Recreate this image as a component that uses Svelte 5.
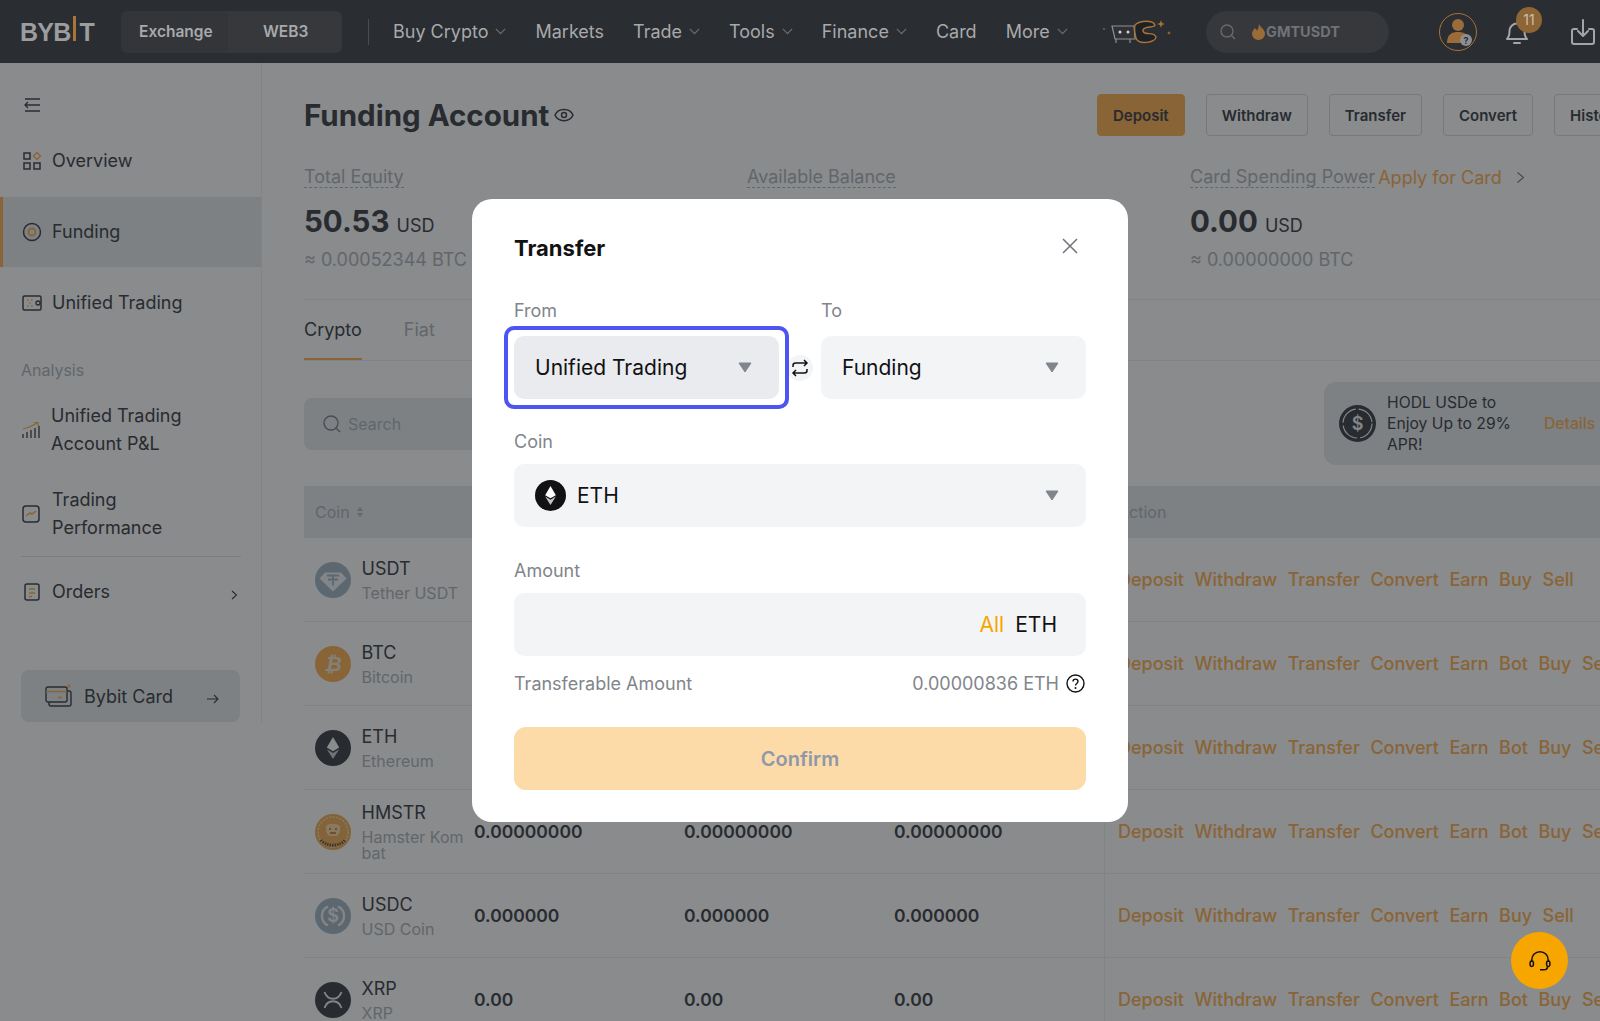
<script lang="ts">
  const nav = [
    { label: 'Buy Crypto', more: true },
    { label: 'Markets', more: false },
    { label: 'Trade', more: true },
    { label: 'Tools', more: true },
    { label: 'Finance', more: true },
    { label: 'Card', more: false },
    { label: 'More', more: true }
  ];

  const full = ['Deposit', 'Withdraw', 'Transfer', 'Convert', 'Earn', 'Bot', 'Buy', 'Sell'];
  const short = ['Deposit', 'Withdraw', 'Transfer', 'Convert', 'Earn', 'Buy', 'Sell'];

  const rows = [
    { coin: 'usdt', symbol: 'USDT', name: 'Tether USDT', value: '0.0000', actions: short },
    { coin: 'btc', symbol: 'BTC', name: 'Bitcoin', value: '0.00000000', actions: full },
    { coin: 'eth', symbol: 'ETH', name: 'Ethereum', value: '0.00000000', actions: full },
    { coin: 'hmstr', symbol: 'HMSTR', name: 'Hamster Kombat', value: '0.00000000', actions: full },
    { coin: 'usdc', symbol: 'USDC', name: 'USD Coin', value: '0.000000', actions: short },
    { coin: 'xrp', symbol: 'XRP', name: 'XRP', value: '0.00', actions: full }
  ];
</script>

{#snippet chevron()}
  <svg class="chev" width="11" height="7" viewBox="0 0 13 8" fill="none"><path d="M1 1l5.500 5.500L12 1" stroke="#6d7074" stroke-width="1.300" /></svg>
{/snippet}

{#snippet caret()}
  <svg class="caret" width="14" height="11" viewBox="0 0 14 11"><path d="M1 1h12L7 10z" fill="#81858c" stroke="#81858c" stroke-linejoin="round" /></svg>
{/snippet}

{#snippet ethMark(size, fill)}
  <svg width={size} height={size} viewBox="0 0 36 36">
    <circle cx="18" cy="18" r="18" fill={fill} />
    <path d="M18 7l6.200 10.600L18 21.200l-6.200-3.600z" fill="#fff" />
    <path d="M18 23l6.200-3.800L18 29l-6.200-9.800z" fill="#fff" opacity=".75" />
  </svg>
{/snippet}

{#snippet coinIcon(coin)}
  {#if coin === 'usdt'}
    <svg width="36" height="36" viewBox="0 0 36 36">
      <circle cx="18" cy="18" r="18" fill="#a9bac6" />
      <path d="M10 10.500h16l5.500 6L18 29.500 4.500 16.500z" fill="#f4f6f7" />
      <path d="M12 13.500h12M18 13.500v10M13 17.500h10" stroke="#a9bac6" stroke-width="1.800" fill="none" />
    </svg>
  {:else if coin === 'btc'}
    <span class="btc">₿</span>
  {:else if coin === 'eth'}
    {@render ethMark(36, '#45484d')}
  {:else if coin === 'hmstr'}
    <svg width="36" height="36" viewBox="0 0 36 36">
      <circle cx="18" cy="18" r="18" fill="#f4b35f" />
      <circle cx="18" cy="18" r="15" fill="none" stroke="#ffdca8" stroke-width="1.500" stroke-dasharray="2 1.500" />
      <path d="M11 12c2-3 12-3 14 0 1 5-1 8-3 10h-8c-2-2-4-5-3-10z" fill="#ffdca8" />
      <path d="M14 15h2M20 15h2M15 19h6" stroke="#b57a30" stroke-width="1.500" />
      <path d="M6 26c5 7 19 7 24 0" fill="none" stroke="#6d5a45" stroke-width="3" stroke-dasharray="1.500 1" />
    </svg>
  {:else if coin === 'usdc'}
    <svg width="36" height="36" viewBox="0 0 36 36">
      <circle cx="18" cy="18" r="18" fill="#a9bac6" />
      <path d="M13 8.500a10.500 10.500 0 0 0 0 19M23 8.500a10.500 10.500 0 0 1 0 19" fill="none" stroke="#f4f6f7" stroke-width="2.400" />
      <text x="18" y="24" text-anchor="middle" class="dollar" fill="#f4f6f7">$</text>
    </svg>
  {:else}
    <svg width="36" height="36" viewBox="0 0 36 36">
      <circle cx="18" cy="18" r="18" fill="#45484d" />
      <path d="M9.500 10c3 9 14 9 17 0M9.500 26c3-9 14-9 17 0" fill="none" stroke="#f4f6f7" stroke-width="1.800" />
    </svg>
  {/if}
{/snippet}

<div class="page">
  <header class="topbar">
    <div class="logo">BYB<span class="logo-i"></span>T</div>
    <div class="switch">
      <span class="switch-on">Exchange</span>
      <span class="switch-off">WEB3</span>
    </div>
    <span class="rule"></span>
    <nav class="nav">
      {#each nav as item}
        <span class="nav-item">{item.label}{#if item.more}{@render chevron()}{/if}</span>
      {/each}
    </nav>
    <svg class="mascot" width="68" height="30" viewBox="0 0 68 30" fill="none">
      <path d="M9 9h22l1 13H12zM13 22v4M27 22v4" stroke="#8f9194" stroke-width="1.200" fill="#2f3135" />
      <circle cx="17" cy="15" r="1.500" fill="#d5d6d7" />
      <circle cx="25" cy="15" r="1.500" fill="#d5d6d7" />
      <path d="M32 8c5-5 18-5 20 0 0 3-13 1-12 6s11 0 13 6c0 6-18 8-20 1-1-4-2-9-1-13z" stroke="#a8743a" stroke-width="1.400" fill="#1f2124" />
      <path d="M58 3l1 3 3 1-3 1-1 3-1-3-3-1 3-1zM66 14l.6 1.400L68 16l-1.400.6-.6 1.400-.6-1.400L64 16l1.400-.6zM1 11l1 1-1 1-1-1z" fill="#a8743a" />
    </svg>
    <div class="ticker">
      <svg width="18" height="18" viewBox="0 0 18 18" fill="none"><circle cx="8" cy="8" r="6" stroke="#66696d" stroke-width="1.400" /><path d="M12.500 12.500L16 16" stroke="#66696d" stroke-width="1.400" /></svg>
      <svg class="flame" width="13" height="16" viewBox="0 0 13 16"><path d="M7 0c1 3 6 5 6 10a6.500 6 0 0 1-13 0c0-3 2-4 2.500-6C4 5 4.500 6 5 6.500 6 5 7 3 7 0z" fill="#9a6c38" /></svg>
      <span>GMTUSDT</span>
    </div>
    <div class="avatar">
      <svg width="34" height="34" viewBox="0 0 34 34">
        <circle cx="17" cy="10" r="6" fill="#9a6c38" />
        <path d="M6 28c0-9 5-11 11-11s11 2 11 11z" fill="#9a6c38" />
        <circle cx="25" cy="25" r="6" fill="#8d8f92" />
        <text x="25" y="28.500" text-anchor="middle" class="qmark">?</text>
      </svg>
    </div>
    <div class="bell">
      <svg width="26" height="28" viewBox="0 0 26 28" fill="none"><path d="M3 21c2-2 2.500-4 2.500-8a7.500 7.500 0 0 1 15 0c0 4 .5 6 2.500 8zM10 25h6" stroke="#a3a5a8" stroke-width="2" stroke-linejoin="round" stroke-linecap="round" /></svg>
      <span class="badge">11</span>
    </div>
    <svg class="download" width="26" height="28" viewBox="0 0 26 28" fill="none"><path d="M7 11H4a2 2 0 0 0-2 2v11a2 2 0 0 0 2 2h18a2 2 0 0 0 2-2V13a2 2 0 0 0-2-2h-3M13 2v15M8 13l5 5 5-5" stroke="#a3a5a8" stroke-width="2" stroke-linecap="round" stroke-linejoin="round" /></svg>
  </header>

  <div class="body">
    <aside class="sidebar">
      <div class="collapse">
        <svg width="18" height="14" viewBox="0 0 18 14" fill="none"><path d="M2 1h15M6 7h11M2 13h15M5 4L2 7l3 3M2 7h4" stroke="#45484d" stroke-width="1.300" /></svg>
      </div>
      <div class="item">
        <svg width="20" height="20" viewBox="0 0 20 20" fill="none"><path d="M2 2h6v6H2zM2 12h6v6H2zM12 12h6v6h-6z" stroke="#45484d" stroke-width="1.500" /><path d="M15 1.500l3.500 3.500L15 8.500 11.500 5z" stroke="#ffb558" stroke-width="1.300" /></svg>
        <span>Overview</span>
      </div>
      <div class="item active">
        <svg width="20" height="20" viewBox="0 0 20 20" fill="none"><circle cx="10" cy="10" r="8.500" stroke="#45484d" stroke-width="1.500" /><circle cx="10" cy="10" r="3.500" stroke="#ffb558" stroke-width="2" /></svg>
        <span>Funding</span>
      </div>
      <div class="item">
        <svg width="20" height="16" viewBox="0 0 20 16" fill="none"><rect x="1" y="1" width="18" height="14" rx="1.500" stroke="#45484d" stroke-width="1.500" /><path d="M5 5h1.500M9 5h1.500M7 8h1.500M5 11h1.500M9 11h1.500" stroke="#ffb558" stroke-width="1.500" /><circle cx="16" cy="8" r="2" stroke="#45484d" stroke-width="1.300" /></svg>
        <span>Unified Trading</span>
      </div>
      <div class="section">Analysis</div>
      <div class="item tall">
        <svg width="18" height="18" viewBox="0 0 18 18" fill="none"><path d="M1 17v-4M5 17v-6M9 17V9M13 17V7M17 17V5" stroke="#45484d" stroke-width="1.300" /><path d="M1 8c4-1 8-2 14-6M12 1.500h4V5" stroke="#ffb558" stroke-width="1.200" /></svg>
        <span class="shift">Unified Trading<br />Account P&amp;L</span>
      </div>
      <div class="item tall">
        <svg width="18" height="18" viewBox="0 0 18 18" fill="none"><rect x="1" y="1" width="16" height="16" rx="3" stroke="#45484d" stroke-width="1.500" /><path d="M4 11l4-3 2 1 4-3" stroke="#ffb558" stroke-width="1.500" /></svg>
        <span>Trading<br />Performance</span>
      </div>
      <div class="item orders">
        <svg width="16" height="18" viewBox="0 0 16 18" fill="none"><rect x="1" y="1" width="14" height="16" rx="2" stroke="#45484d" stroke-width="1.500" /><path d="M5 6h6M5 10h6M5 13.500h3" stroke="#ffb558" stroke-width="1.500" /></svg>
        <span>Orders</span>
        <svg class="orders-go" width="7" height="10" viewBox="0 0 7 10" fill="none"><path d="M1 1l4.500 4L1 9" stroke="#45484d" stroke-width="1.100" /></svg>
      </div>
      <div class="card-link">
        <svg width="27" height="24" viewBox="0 0 27 24" fill="none"><rect x="4" y="7" width="22" height="15" rx="2" stroke="#45484d" stroke-width="1.400" /><rect x="1" y="3" width="21" height="15" rx="2" fill="#e8ebee" stroke="#45484d" stroke-width="1.400" /><path d="M1 7.500h21M13 13.500h4" stroke="#ffb558" stroke-width="1.500" /><path d="M24 0v4M22 2h4" stroke="#ffb558" stroke-width="1.200" /></svg>
        <span>Bybit Card</span>
        <svg class="card-go" width="12" height="10" viewBox="0 0 12 10" fill="none"><path d="M0 5h11M7 1l4 4-4 4" stroke="#45484d" stroke-width="1.100" /></svg>
      </div>
    </aside>

    <main class="main">
      <div class="title-row">
        <div class="title">
          <h1>Funding Account</h1>
          <svg width="20" height="14" viewBox="0 0 20 14" fill="none"><path d="M1 7c3-7.500 15-7.500 18 0-3 7.500-15 7.500-18 0z" stroke="#45484d" stroke-width="1.500" /><circle cx="10" cy="7" r="2.500" stroke="#45484d" stroke-width="1.500" /></svg>
        </div>
        <button class="btn primary">Deposit</button>
        <button class="btn">Withdraw</button>
        <button class="btn">Transfer</button>
        <button class="btn">Convert</button>
        <button class="btn">History</button>
      </div>

      <div class="stats">
        <div class="stat">
          <span class="stat-label">Total Equity</span>
          <div class="stat-value"><b>50.53</b> USD</div>
          <div class="stat-sub">≈ 0.00052344 BTC</div>
        </div>
        <div class="stat">
          <span class="stat-label">Available Balance</span>
          <div class="stat-value"><b>50.53</b> USD</div>
          <div class="stat-sub">≈ 0.00052344 BTC</div>
        </div>
        <div class="stat">
          <div class="stat-head">
            <span class="stat-label">Card Spending Power</span>
            <span class="apply">Apply for Card</span>
            <svg width="9" height="13" viewBox="0 0 9 13" fill="none"><path d="M1.500 1.500l6 5-6 5" stroke="#85898d" stroke-width="1.200" /></svg>
          </div>
          <div class="stat-value"><b>0.00</b> USD</div>
          <div class="stat-sub">≈ 0.00000000 BTC</div>
        </div>
      </div>

      <div class="tabs">
        <span class="tab on">Crypto</span>
        <span class="tab">Fiat</span>
      </div>

      <div class="toolbar">
        <div class="search">
          <svg width="18" height="18" viewBox="0 0 18 18" fill="none"><circle cx="8" cy="8" r="7" stroke="#85898d" stroke-width="1.400" /><path d="M13 13l4 4" stroke="#85898d" stroke-width="1.400" /></svg>
          <span>Search</span>
        </div>
        <div class="promo">
          <svg width="37" height="37" viewBox="0 0 37 37" fill="none">
            <circle cx="18.500" cy="18.500" r="18.500" fill="#45484d" />
            <circle cx="18.500" cy="18.500" r="14.500" stroke="#f4f6f7" stroke-width="1.200" stroke-dasharray="20 3" />
            <text x="18.500" y="25" text-anchor="middle" class="dollar" fill="#f4f6f7">$</text>
          </svg>
          <p>HODL USDe to Enjoy Up to 29% APR!</p>
          <span class="details">Details</span>
        </div>
      </div>

      <div class="table">
        <div class="row head">
          <div class="cell">Coin
            <svg width="8" height="12" viewBox="0 0 8 12"><path d="M4 1l3 4H1zM4 11L1 7h6z" fill="#b3b9be" /></svg>
          </div>
          <div class="cell"></div>
          <div class="cell"></div>
          <div class="cell"></div>
          <div class="cell actions">Action</div>
        </div>
        {#each rows as row}
          <div class="row">
            <div class="cell coin">
              {@render coinIcon(row.coin)}
              <div class="coin-text">
                <div class="symbol">{row.symbol}</div>
                <div class="name">{row.name}</div>
              </div>
            </div>
            <div class="cell num">{row.value}</div>
            <div class="cell num">{row.value}</div>
            <div class="cell num">{row.value}</div>
            <div class="cell actions">
              {#each row.actions as action}
                <span>{action}</span>
              {/each}
            </div>
          </div>
        {/each}
      </div>
    </main>
  </div>

  <div class="overlay">
    <div class="modal">
      <div class="modal-head">
        <h2>Transfer</h2>
        <svg width="16" height="16" viewBox="0 0 16 16" fill="none"><path d="M1 1l14 14M15 1L1 15" stroke="#6f7378" stroke-width="1.500" /></svg>
      </div>
      <div class="pair">
        <div class="field">
          <label for="from">From</label>
          <button id="from" class="select focus">Unified Trading {@render caret()}</button>
        </div>
        <div class="swap">
          <svg width="18" height="18" viewBox="0 0 18 18" fill="none"><path d="M2 8V6.500A2.500 2.500 0 0 1 4.500 4H16M13 1l3 3-3 3M16 10v1.500a2.500 2.500 0 0 1-2.500 2.500H2M5 11l-3 3 3 3" stroke="#121214" stroke-width="1.500" /></svg>
        </div>
        <div class="field">
          <label for="to">To</label>
          <button id="to" class="select">Funding {@render caret()}</button>
        </div>
      </div>
      <label class="lbl coin-lbl" for="coin">Coin</label>
      <button id="coin" class="select">
        <span class="coin-pick">{@render ethMark(31, '#121214')} ETH</span>
        {@render caret()}
      </button>
      <label class="lbl amount-lbl" for="amount">Amount</label>
      <div class="select amount">
        <input id="amount" />
        <span class="all">All</span>
        <span class="unit">ETH</span>
      </div>
      <div class="avail">
        <span>Transferable Amount</span>
        <span class="avail-val">0.00000836 ETH
          <svg width="19" height="19" viewBox="0 0 19 19" fill="none"><circle cx="9.500" cy="9.500" r="8.500" stroke="#121214" stroke-width="1.400" /><path d="M7 7.500c0-3.200 5-3.200 5 0 0 2-2.500 2-2.500 4" stroke="#121214" stroke-width="1.400" /><circle cx="9.500" cy="14" r="1" fill="#121214" /></svg>
        </span>
      </div>
      <button class="confirm">Confirm</button>
    </div>
  </div>

  <button class="chat" aria-label="Support">
    <svg width="22" height="22" viewBox="0 0 20 20" fill="none"><path d="M2.500 11V9a7.500 7.500 0 0 1 15 0v2M17 14.500c0 2-1.500 3.500-3.500 3.500H10" stroke="#121214" stroke-width="1.400" /><rect x="1" y="10" width="3" height="5" rx="1.500" stroke="#121214" stroke-width="1.400" /><rect x="16" y="10" width="3" height="5" rx="1.500" stroke="#121214" stroke-width="1.400" /></svg>
  </button>
</div>

<style>
  :global(body) {
    margin: 0;
    background: #fff;
    font-family: Inter, "Liberation Sans", sans-serif;
  }
  button {
    font: inherit;
    border: none;
    padding: 0;
  }
  .page {
    --ink: #45484d;
    --muted: #b3b9be;
    --soft: #e8ebee;
    --orange: #ffb558;
    position: relative;
    height: 1021px;
    overflow: hidden;
    color: var(--ink);
  }

  /* top bar sits above the dim layer */
  .topbar {
    position: relative;
    z-index: 2;
    display: flex;
    align-items: center;
    height: 63px;
    padding: 0 4px 0 20px;
    background: #2a2d31;
    color: #a8a9ab;
    font-size: 18px;
  }
  .topbar > * {
    flex: none;
  }
  .logo {
    display: flex;
    align-items: flex-end;
    width: 75px;
    font-family: "Liberation Sans", sans-serif;
    font-size: 25px;
    font-weight: 700;
    line-height: 30px;
    letter-spacing: -0.8px;
    color: #9c9d9f;
  }
  .logo-i {
    flex: none;
    width: 3px;
    height: 25px;
    margin: 0 3px 6px 3px;
    background: #a8743a;
  }
  .switch {
    display: flex;
    align-items: center;
    width: 221px;
    height: 42px;
    margin-left: 26px;
    border-radius: 6px;
    background: #36383c;
    font-size: 15.500px;
    font-weight: 600;
  }
  .switch-on {
    box-sizing: border-box;
    width: 107px;
    padding-left: 18px;
    line-height: 42px;
    border-radius: 6px;
    background: #333539;
  }
  .switch-off {
    padding-left: 35px;
  }
  .rule {
    width: 1px;
    height: 26px;
    margin: 0 24px 0 26px;
    background: #4a4c50;
  }
  .nav {
    display: flex;
    gap: 29px;
  }
  .nav-item {
    display: flex;
    align-items: center;
    white-space: nowrap;
  }
  .chev {
    margin-left: 7px;
  }
  .mascot {
    margin-left: auto;
  }
  .ticker {
    display: flex;
    align-items: center;
    box-sizing: border-box;
    width: 183px;
    height: 42px;
    margin-left: 35px;
    padding-left: 13px;
    border-radius: 21px;
    background: #36383c;
    color: #6f7276;
    font-size: 14.500px;
    font-weight: 700;
  }
  .flame {
    margin-left: 15px;
    margin-right: 1px;
  }
  .avatar {
    display: flex;
    align-items: center;
    justify-content: center;
    width: 36px;
    height: 36px;
    margin-left: 50px;
    border: 1px solid #a8743a;
    border-radius: 50%;
    overflow: hidden;
  }
  .bell {
    position: relative;
    margin-left: 27px;
    height: 28px;
  }
  .badge {
    position: absolute;
    top: -11px;
    left: 12px;
    width: 26px;
    height: 26px;
    border-radius: 50%;
    background: #8e6535;
    color: #c9c0b2;
    font-size: 14px;
    line-height: 26px;
    text-align: center;
  }
  .download {
    margin-left: 40px;
  }

  .body {
    display: flex;
    align-items: flex-start;
  }
  .sidebar {
    flex: none;
    box-sizing: border-box;
    width: 262px;
    height: 660px;
    border-right: 1px solid #f0f2f3;
  }
  .collapse {
    display: flex;
    align-items: center;
    box-sizing: border-box;
    height: 63px;
    padding: 20px 0 0 23px;
  }
  .item {
    display: flex;
    align-items: center;
    gap: 10px;
    box-sizing: border-box;
    height: 70px;
    padding-left: 22px;
    font-size: 18px;
    line-height: 28px;
  }
  .item svg {
    flex: none;
  }
  .item.active {
    margin: 1px 0;
    padding-left: 19px;
    background: var(--soft);
    border-left: 3px solid var(--orange);
  }
  .section {
    height: 19px;
    padding: 23px 0 8px 21px;
    color: var(--muted);
    font-size: 16px;
    line-height: 19px;
  }
  .item.tall {
    gap: 12px;
    height: 84px;
  }
  .shift {
    margin-left: -1px;
  }
  .item.orders {
    gap: 12px;
    margin: 0 20px 0 21px;
    padding-left: 3px;
    border-top: 1px solid #e3e6e8;
  }
  .orders-go {
    margin-left: auto;
    margin-top: 7px;
    margin-right: 3px;
  }
  .card-link {
    display: flex;
    align-items: center;
    gap: 12px;
    box-sizing: border-box;
    width: 219px;
    height: 52px;
    margin: 44px 0 0 21px;
    padding: 0 21px 0 24px;
    border-radius: 8px;
    background: var(--soft);
    font-size: 18px;
  }
  .card-go {
    margin-left: auto;
    margin-top: 6px;
  }

  .main {
    flex: none;
    box-sizing: border-box;
    width: 1338px;
    padding-left: 42px;
  }
  .title-row {
    display: flex;
    align-items: center;
    gap: 21px;
    height: 42px;
    margin-top: 31px;
    white-space: nowrap;
  }
  .title {
    display: flex;
    flex: none;
    align-items: center;
    gap: 5px;
    width: 772px;
  }
  h1 {
    margin: 0;
    font-size: 29.500px;
    font-weight: 700;
  }
  .btn {
    flex: none;
    height: 42px;
    padding: 0 15px;
    border: 1px solid #d9dcdf;
    border-radius: 4px;
    background: none;
    color: var(--ink);
    font-size: 15px;
    font-weight: 600;
  }
  .btn.primary {
    border-color: var(--orange);
    background: var(--orange);
  }

  .stats {
    display: grid;
    grid-template-columns: 443px 443px 443px;
    box-sizing: border-box;
    height: 134px;
    margin-top: 30px;
    border-bottom: 1px solid #f0f2f3;
  }
  .stat-head {
    display: flex;
    align-items: center;
    gap: 3px;
  }
  .stat-head svg {
    margin-left: 11px;
  }
  .stat-label {
    display: inline-block;
    color: var(--muted);
    font-size: 18px;
    line-height: 21px;
    border-bottom: 1px dashed var(--muted);
  }
  .apply {
    color: var(--orange);
    font-size: 18px;
  }
  .stat-value {
    margin-top: 13px;
    font-size: 18px;
    line-height: 40px;
  }
  .stat-value b {
    margin-right: 2px;
    font-size: 29.500px;
    font-weight: 700;
  }
  .stat-sub {
    margin-top: 3px;
    color: var(--muted);
    font-size: 18px;
    line-height: 22px;
  }

  .tabs {
    display: flex;
    gap: 42px;
    box-sizing: border-box;
    height: 61px;
    border-bottom: 1px solid #f0f2f3;
    color: var(--muted);
    font-size: 18px;
    line-height: 60px;
  }
  .tab.on {
    box-sizing: border-box;
    height: 60px;
    border-bottom: 2px solid var(--orange);
    color: var(--ink);
  }

  .toolbar {
    display: flex;
    align-items: center;
    justify-content: space-between;
    height: 83px;
    margin-top: 21px;
  }
  .search {
    display: flex;
    align-items: center;
    gap: 7px;
    box-sizing: border-box;
    width: 300px;
    height: 52px;
    padding-left: 19px;
    border-radius: 8px;
    background: var(--soft);
    color: var(--muted);
    font-size: 16px;
  }
  .promo {
    display: flex;
    align-items: center;
    box-sizing: border-box;
    width: 276px;
    height: 83px;
    padding-left: 15px;
    border-radius: 12px 0 0 12px;
    background: var(--soft);
    font-size: 15.700px;
    line-height: 21px;
  }
  .promo svg {
    flex: none;
  }
  .promo p {
    width: 140px;
    margin: 0 17px 0 11px;
  }
  .details {
    color: var(--orange);
    font-weight: 500;
  }
  .dollar {
    font-size: 18px;
    font-family: Inter, sans-serif;
    font-weight: 600;
  }
  .qmark {
    font-size: 9px;
    font-weight: 700;
    fill: #2a2d31;
  }

  .table {
    margin-top: 21px;
  }
  .row {
    display: grid;
    grid-template-columns: 170px 210px 210px 210px 1fr;
    box-sizing: border-box;
    height: 84px;
    border-bottom: 1px solid #f0f2f3;
  }
  .row.head {
    height: 52px;
    border: none;
    background: var(--soft);
    color: var(--muted);
    font-size: 16px;
  }
  .cell {
    display: flex;
    align-items: center;
    white-space: nowrap;
  }
  .row.head .cell:first-child {
    gap: 6px;
    padding-left: 11px;
  }
  .coin {
    gap: 10.500px;
    padding-left: 11px;
  }
  .btc {
    display: block;
    flex: none;
    width: 36px;
    height: 36px;
    border-radius: 50%;
    background: #ffb558;
    color: #f4e8d8;
    font-family: "DejaVu Sans", sans-serif;
    font-size: 20px;
    font-style: italic;
    font-weight: 700;
    line-height: 36px;
    text-align: center;
  }
  .coin-text {
    width: 102px;
    white-space: normal;
    word-break: break-all;
  }
  .symbol {
    margin-bottom: 5px;
    font-size: 18px;
    line-height: 22px;
  }
  .name {
    color: var(--muted);
    font-size: 16px;
    line-height: 16px;
  }
  .num {
    font-size: 17.500px;
    font-weight: 600;
  }
  .actions {
    gap: 10.500px;
    padding-left: 13px;
    border-left: 1px solid #f0f2f3;
    color: var(--orange);
    font-size: 18px;
    font-weight: 500;
  }
  .row.head .actions {
    border: none;
    padding-left: 14px;
    color: var(--muted);
    font-size: 16px;
    font-weight: 400;
  }

  .overlay {
    position: absolute;
    inset: 0;
    z-index: 1;
    display: flex;
    align-items: center;
    justify-content: center;
    background: rgba(8, 12, 16, 0.48);
  }
  .modal {
    box-sizing: border-box;
    width: 656px;
    height: 623px;
    padding: 0 42px;
    border-radius: 20px;
    background: #fff;
    color: #121214;
    font-size: 18px;
  }
  .modal-head {
    display: flex;
    align-items: center;
    justify-content: space-between;
    height: 100px;
    padding-right: 8px;
  }
  .modal-head h2 {
    margin-bottom: 2px;
  }
  .modal-head svg {
    margin-bottom: 6px;
  }
  h2 {
    margin: 0;
    font-size: 22px;
    font-weight: 700;
  }
  .pair {
    display: grid;
    grid-template-columns: 265px 42px 265px;
    align-items: end;
  }
  label,
  .lbl {
    display: block;
    height: 37px;
    color: #81858c;
    line-height: 24px;
  }
  .select {
    display: flex;
    align-items: center;
    justify-content: space-between;
    box-sizing: border-box;
    width: 100%;
    height: 63px;
    padding: 0 27px 0 21px;
    border-radius: 10px;
    background: #f3f4f6;
    color: #121214;
    font-size: 21px;
    line-height: 24px;
  }
  .select.focus {
    position: relative;
    background: #e9ebee;
  }
  .select.focus::after {
    content: "";
    position: absolute;
    inset: -10px;
    border: 4px solid #4c55f2;
    border-radius: 10px;
  }
  .swap {
    display: flex;
    align-items: center;
    justify-content: center;
    width: 26px;
    height: 26px;
    margin: 0 0 18px 8px;
    border-radius: 50%;
    background: #f3f4f6;
  }
  .coin-lbl {
    height: 34px;
    margin-top: 31px;
  }
  .coin-pick {
    display: flex;
    align-items: center;
    gap: 11px;
  }
  .amount-lbl {
    height: 34px;
    margin-top: 32px;
  }
  .amount {
    justify-content: flex-end;
    gap: 11px;
    padding-right: 29px;
  }
  .amount input {
    flex: 1;
    min-width: 0;
    border: none;
    outline: none;
    background: none;
  }
  .all {
    color: #f7a600;
  }
  .avail {
    display: flex;
    align-items: center;
    justify-content: space-between;
    height: 24px;
    margin-top: 15px;
    color: #81858c;
  }
  .avail-val {
    display: flex;
    align-items: center;
    gap: 7px;
    padding-right: 1px;
  }
  .confirm {
    display: block;
    width: 100%;
    height: 63px;
    margin-top: 32px;
    border-radius: 12px;
    background: #fcdba8;
    color: #8e98a8;
    font-size: 20px;
    font-weight: 600;
  }
  .chat {
    position: absolute;
    z-index: 3;
    left: 1511px;
    top: 932px;
    display: flex;
    align-items: center;
    justify-content: center;
    width: 57px;
    height: 57px;
    border-radius: 50%;
    background: #f7a600;
  }
</style>
